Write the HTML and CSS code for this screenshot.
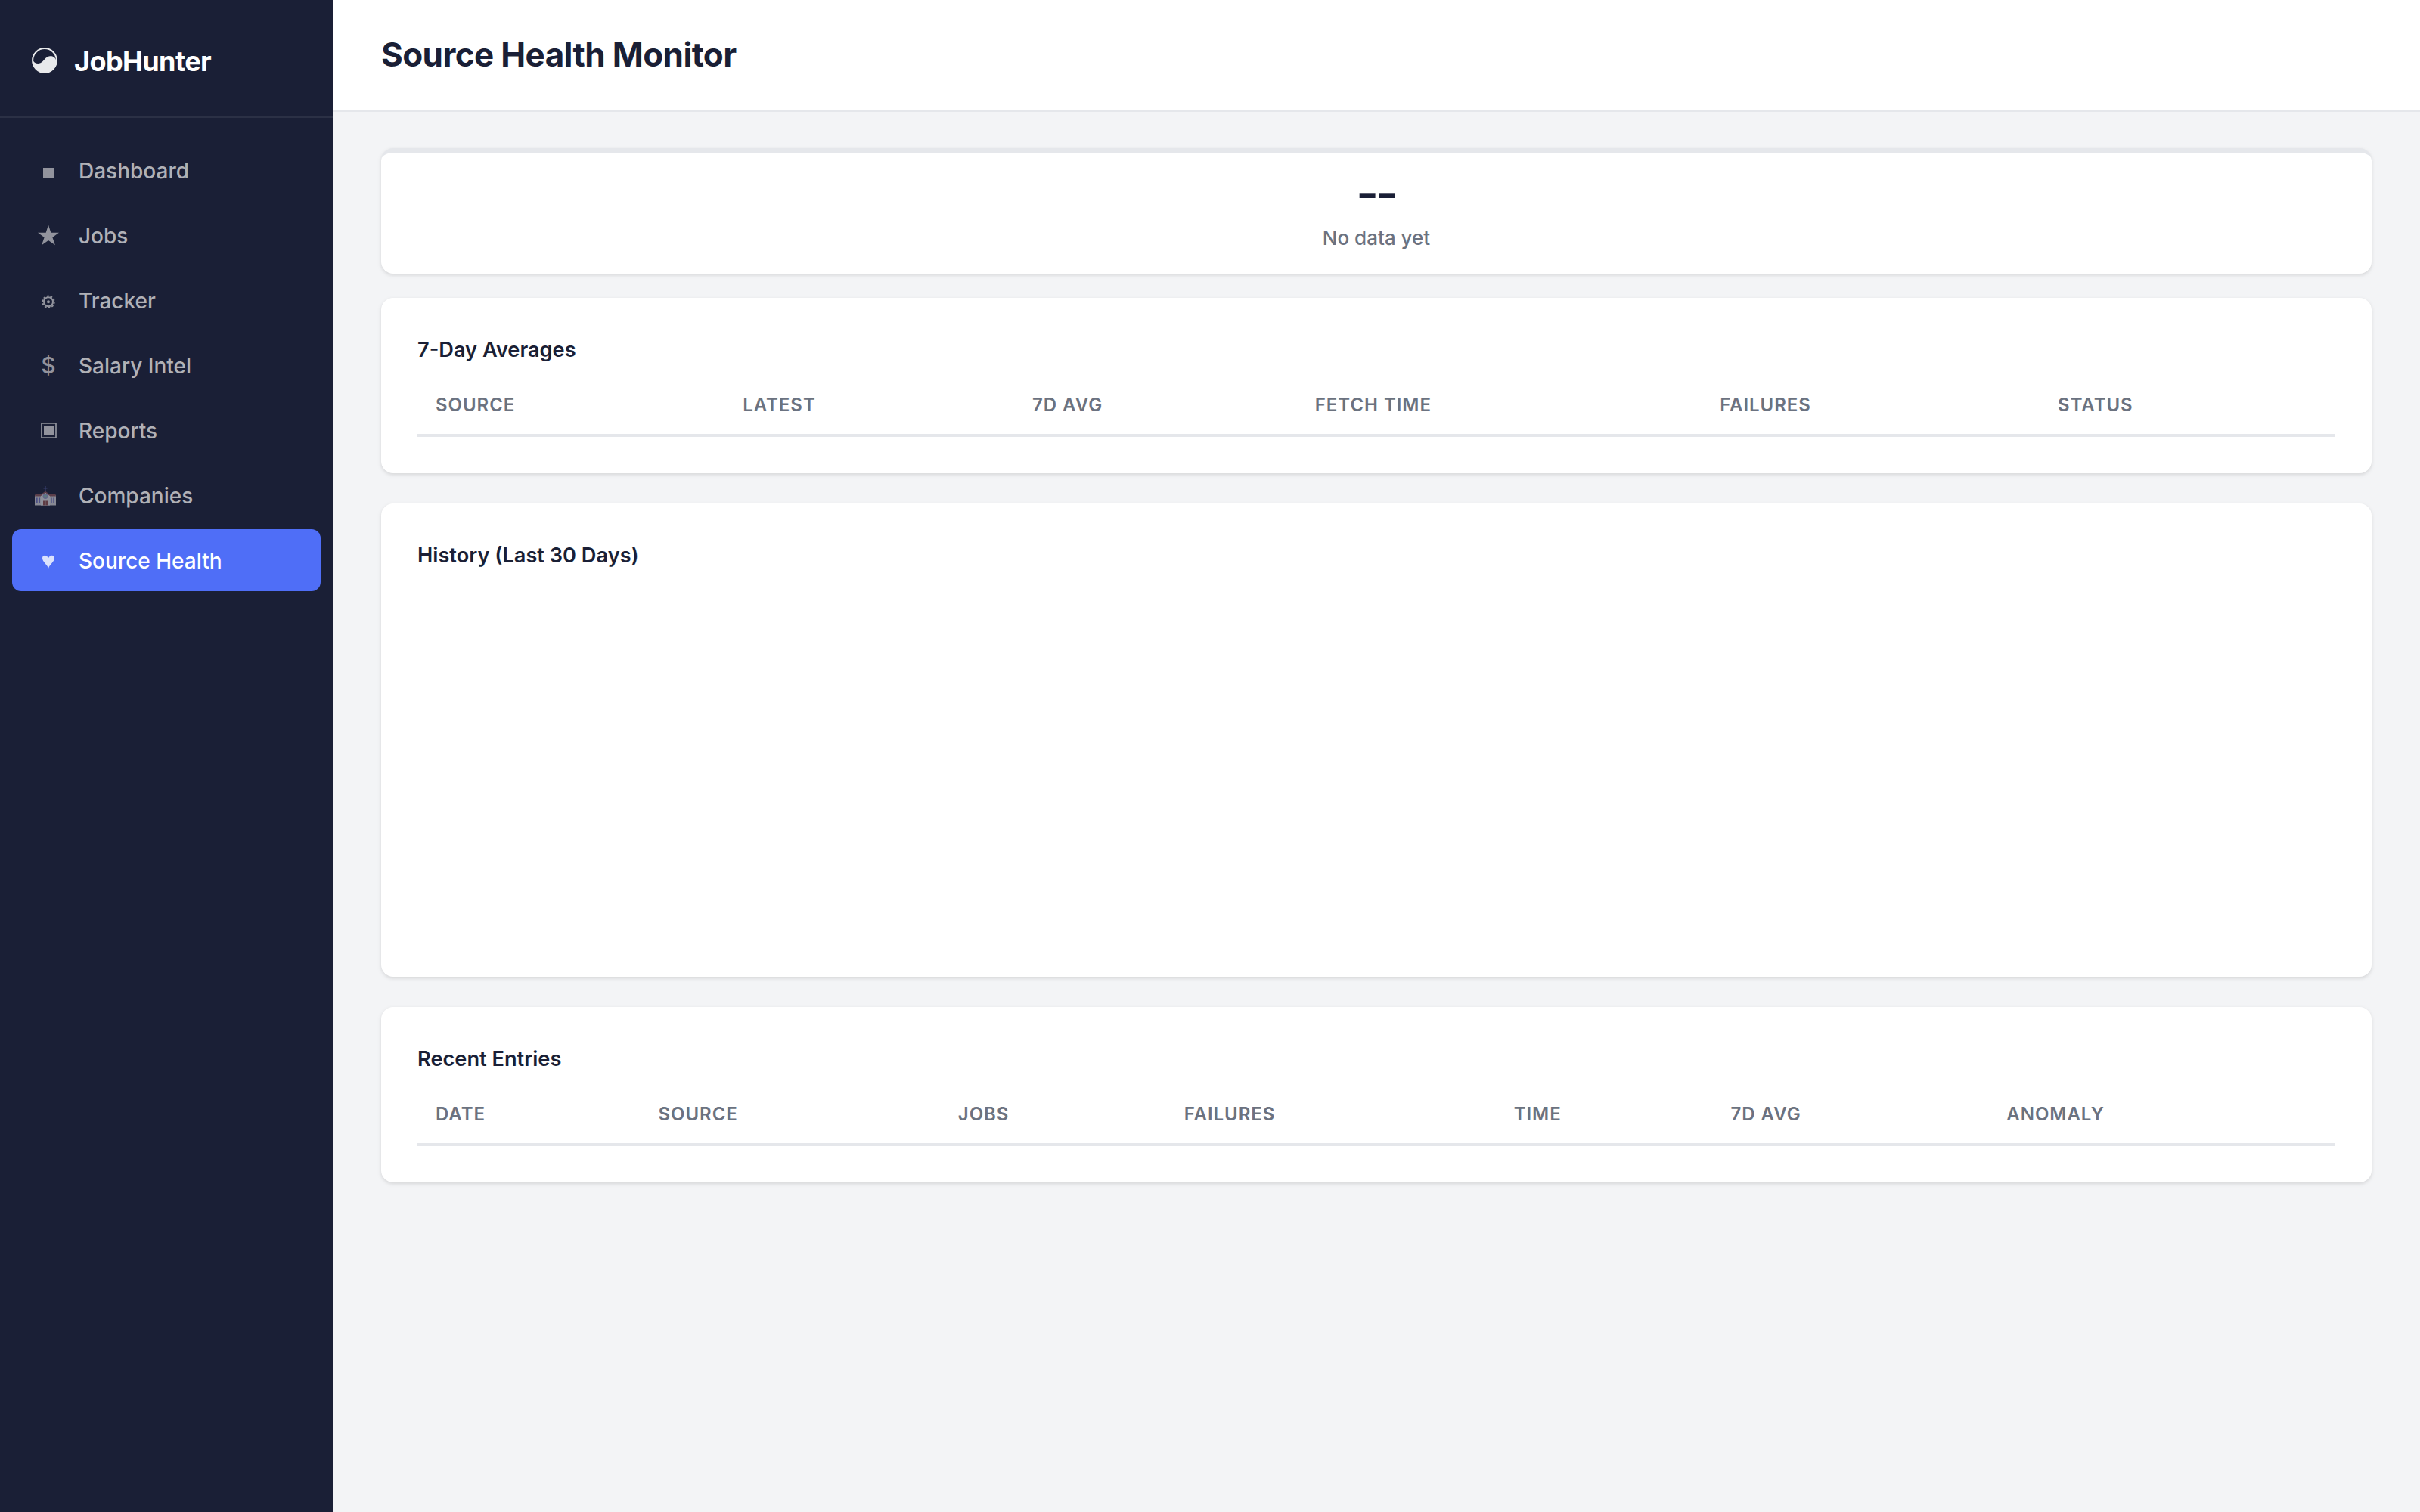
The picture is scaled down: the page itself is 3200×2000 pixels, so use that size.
FILE: index.html
```html
<!DOCTYPE html>
<html lang="en">
<head>
    <meta charset="UTF-8">
    <meta name="viewport" content="width=device-width, initial-scale=1.0">
    <title>Source Health Monitor - JobHunter</title>
    <link rel="stylesheet" href="styles.css">
</head>
<body>
    <aside class="sidebar">
        <div class="brand">
            <svg class="brand-icon" viewBox="0 0 34 34">
                <circle cx="17" cy="17" r="15.9" fill="none" stroke="currentColor" stroke-width="2"/>
                <path d="M1.500 17C3.500 20.500 7.500 22 11.500 20.300C16.500 18 17.500 12 24 11.300C28 11 30.500 12.500 32.500 17A15.500 15.500 0 0 1 1.500 17Z" fill="currentColor"/>
            </svg>
            <span class="brand-name">JobHunter</span>
        </div>

        <nav class="nav">
            <a class="nav-item">
                <span class="nav-icon"><svg viewBox="0 0 40 42"><path d="M13 18h14v14H13z"/></svg></span>
                <span class="nav-label">Dashboard</span>
            </a>
            <a class="nav-item">
                <span class="nav-icon"><svg viewBox="0 0 40 42"><path d="M20 7.500l3.300 10.200H34l-8.600 6.300 3.500 10.200L20 27.900l-8.900 6.300L14.600 24 6 17.700h10.700z"/></svg></span>
                <span class="nav-label">Jobs</span>
            </a>
            <a class="nav-item">
                <span class="nav-icon">
                    <svg viewBox="0 0 40 42">
                        <circle cx="20" cy="23.300" r="6" fill="none" stroke="currentColor" stroke-width="2"/>
                        <circle cx="20" cy="23.300" r="7.700" fill="none" stroke="currentColor" stroke-width="2" stroke-dasharray="2.700 2.138"/>
                        <circle cx="20" cy="23.300" r="2"/>
                    </svg>
                </span>
                <span class="nav-label">Tracker</span>
            </a>
            <a class="nav-item">
                <span class="nav-icon">$</span>
                <span class="nav-label">Salary Intel</span>
            </a>
            <a class="nav-item">
                <span class="nav-icon">
                    <svg viewBox="0 0 40 42">
                        <path d="M11 12h19v19H11z" fill="none" stroke="currentColor" stroke-width="1.700"/>
                        <path d="M14 15h13v13H14z"/>
                    </svg>
                </span>
                <span class="nav-label">Reports</span>
            </a>
            <a class="nav-item">
                <span class="nav-icon">
                    <svg viewBox="0 0 40 42">
                        <path d="M15.400 9h1.200v2.300h2v1.200h-2V17h-1.200v-4.500h-2v-1.200h2z" fill="#3f4578"/>
                        <path d="M2 21h28v13.500H2z" fill="#a3a3ab"/>
                        <path d="M2.600 19.300h26.800L30 22.500H2z" fill="#6d4650"/>
                        <path d="M16 17l6 4.500v13H10v-13z" fill="#aeaeb5"/>
                        <path d="M16 15.800l6.800 5-.9 1.300L16 17.800 10.100 22.100l-.9-1.300z" fill="#6d4650"/>
                        <circle cx="16" cy="22.500" r="3.400" fill="#777c9f"/>
                        <circle cx="16" cy="22.500" r="1.800" fill="#6c9a90"/>
                        <path d="M13 28.500h6v6h-6z" fill="#704347"/>
                        <path d="M15.700 28.500h.6v6h-.6z" fill="#a3a3ab"/>
                        <path d="M4 24.500h1.700V32H4zM7.300 24.500H9V32H7.300zM23 24.500h1.700V32H23zM26.300 24.500H28V32h-1.700z" fill="#5a5d9a"/>
                    </svg>
                </span>
                <span class="nav-label">Companies</span>
            </a>
            <a class="nav-item active">
                <span class="nav-icon"><svg viewBox="0 0 40 42"><path d="M20 32C18.500 27 12 23 12 18.300C12 13.500 18 13.500 20 18.300C22 13.500 28 13.500 28 18.300C28 23 21.500 27 20 32Z"/></svg></span>
                <span class="nav-label">Source Health</span>
            </a>
        </nav>
    </aside>

    <main class="main">
        <header class="page-header">
            <h1>Source Health Monitor</h1>
        </header>

        <div class="content">
            <div class="stat-card">
                <div class="stat-value">--</div>
                <div class="stat-label">No data yet</div>
            </div>

            <section class="card">
                <h3>7-Day Averages</h3>
                <table>
                    <thead>
                        <tr>
                            <th>Source</th>
                            <th>Latest</th>
                            <th>7d Avg</th>
                            <th>Fetch Time</th>
                            <th>Failures</th>
                            <th>Status</th>
                        </tr>
                    </thead>
                    <tbody></tbody>
                </table>
            </section>

            <section class="card history">
                <h3>History (Last 30 Days)</h3>
            </section>

            <section class="card">
                <h3>Recent Entries</h3>
                <table>
                    <thead>
                        <tr>
                            <th>Date</th>
                            <th>Source</th>
                            <th>Jobs</th>
                            <th>Failures</th>
                            <th>Time</th>
                            <th>7d Avg</th>
                            <th>Anomaly</th>
                        </tr>
                    </thead>
                    <tbody></tbody>
                </table>
            </section>
        </div>
    </main>
</body>
</html>
```
FILE: styles.css
```css
* {
    margin: 0;
    padding: 0;
    box-sizing: border-box;
}

body {
    display: flex;
    min-height: 100vh;
    font-family: Inter, sans-serif;
    font-size: 28px;
    line-height: 1.5;
    color: #1a1f36;
    background: #f3f4f6;
}

/* Sidebar */
.sidebar {
    width: 440px;
    flex-shrink: 0;
    background: #1a1f36;
}

.brand {
    display: flex;
    align-items: center;
    gap: 20px;
    height: 156px;
    padding: 6px 40px 0;
    border-bottom: 2px solid rgba(255, 255, 255, 0.08);
    color: #fff;
}

.brand-icon {
    width: 38px;
    height: 34px;
    color: #e8e9eb;
}

.brand-name {
    padding-top: 2px;
    font-size: 36px;
    font-weight: 700;
    letter-spacing: -0.6px;
}

.nav {
    display: flex;
    flex-direction: column;
    gap: 4px;
    padding: 28px 16px;
}

.nav-item {
    display: flex;
    align-items: center;
    gap: 20px;
    height: 82px;
    padding: 0 28px;
    border-radius: 12px;
    color: #b0b1b7;
    font-weight: 500;
}

.nav-item.active {
    background: #4f6ef7;
    color: #fff;
}

.nav-label {
    padding-top: 2px;
}

.nav-icon {
    width: 40px;
    height: 42px;
    flex-shrink: 0;
    font-size: 30px;
    line-height: 43px;
    text-align: center;
    opacity: 0.8;
}

.nav-icon svg {
    display: block;
    width: 40px;
    height: 42px;
    fill: currentColor;
}

/* Main */
.main {
    flex: 1;
}

.page-header {
    padding: 39px 64px 41px;
    background: #fff;
    border-bottom: 2px solid #e5e7eb;
}

.page-header h1 {
    font-size: 44px;
    font-weight: 700;
    letter-spacing: -0.6px;
}

.content {
    padding: 48px 64px;
}

.stat-card,
.card {
    background: #fff;
    border-radius: 16px;
    box-shadow: 0 2px 6px rgba(0, 0, 0, 0.08), 0 2px 4px rgba(0, 0, 0, 0.05);
}

.stat-card {
    height: 166px;
    margin-bottom: 32px;
    padding: 25px 32px;
    border-top: 6px solid #e5e7eb;
    text-align: center;
}

.stat-value {
    padding-right: 2px;
    font-size: 64px;
    font-weight: 600;
    line-height: 55px;
    letter-spacing: -4px;
}

.stat-label {
    margin-top: 13px;
    font-size: 26px;
    color: #6b7280;
    font-weight: 500;
}

.card {
    margin-bottom: 40px;
    padding: 47px 48px 48px;
}

.card h3 {
    height: 42px;
    margin-bottom: 13px;
    font-size: 27.2px;
    font-weight: 600;
    line-height: 43px;
}

.history {
    height: 626px;
}

table {
    width: 100%;
    border-collapse: collapse;
}

th {
    height: 80px;
    padding: 21px 24px 19px;
    border-bottom: 4px solid #e5e7eb;
    color: #6b7280;
    font-size: 24px;
    font-weight: 600;
    letter-spacing: 0.04em;
    text-align: left;
    text-transform: uppercase;
}
```
